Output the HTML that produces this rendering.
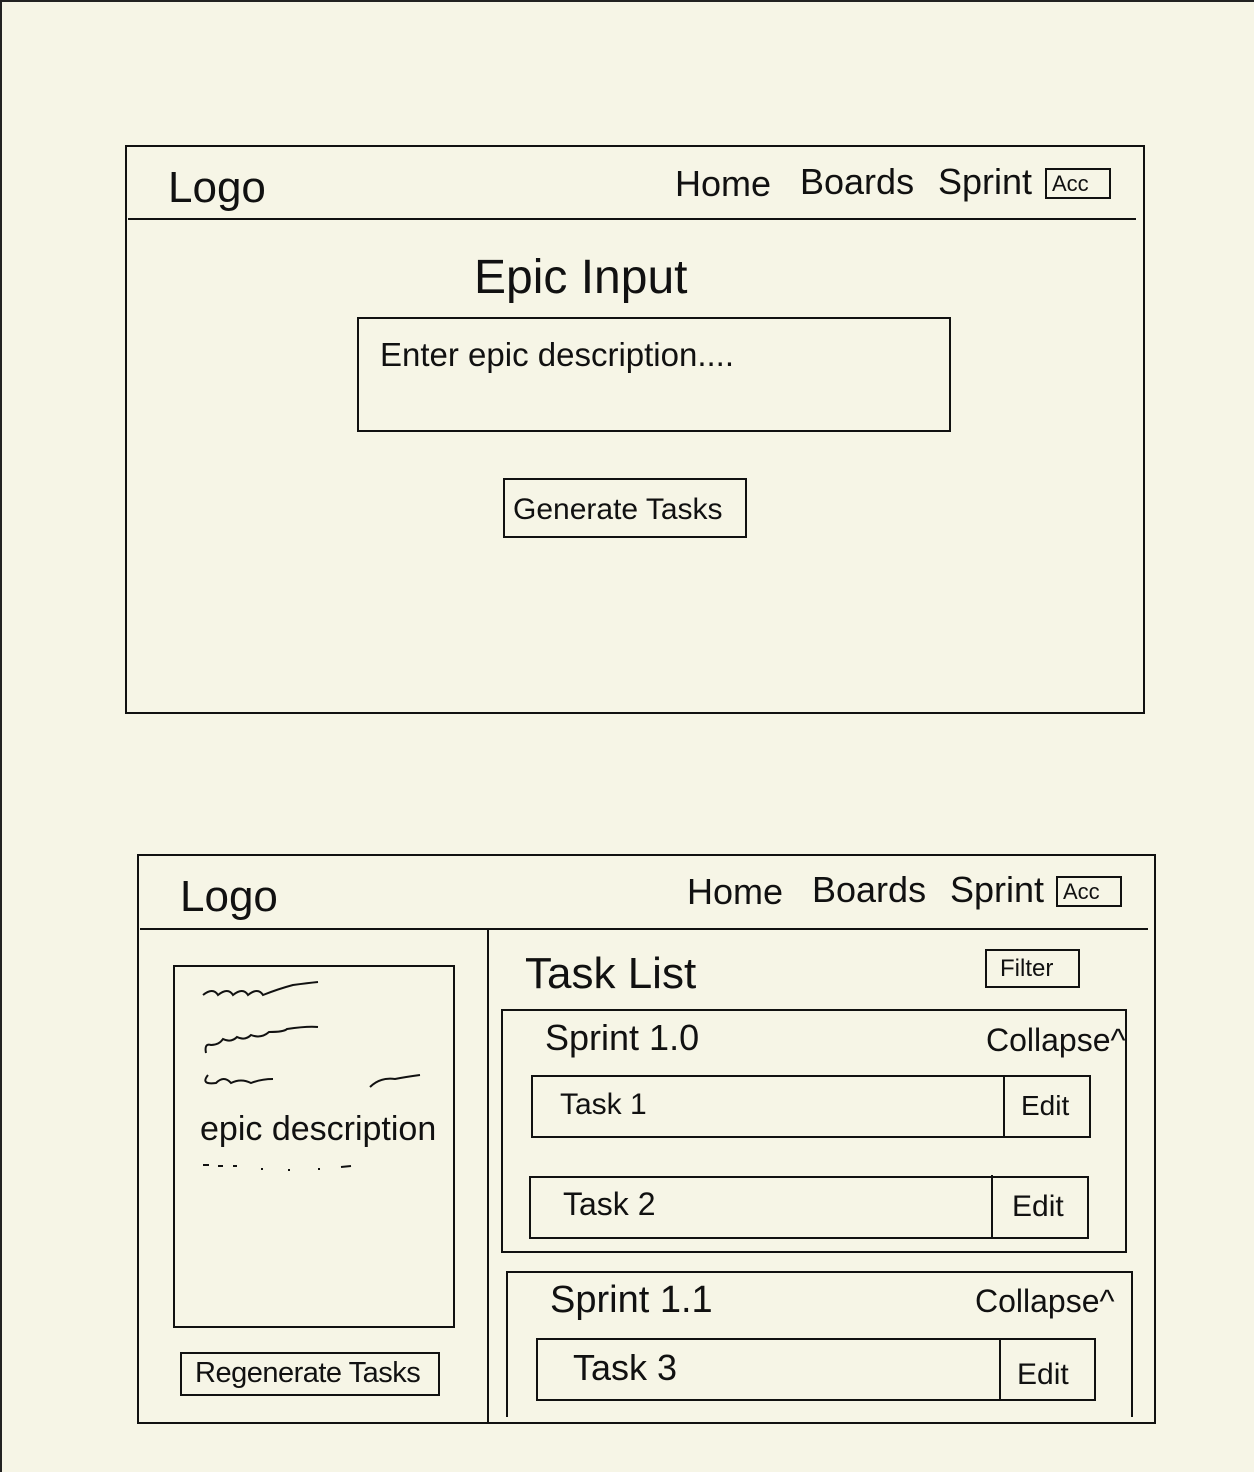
<!DOCTYPE html>
<html><head><meta charset="utf-8"><style>
html,body{margin:0;padding:0}
body{width:1254px;height:1472px;background:#f6f5e6;position:relative;overflow:hidden;font-family:"Liberation Sans",sans-serif;color:#111}
.frame{position:absolute;left:0;top:0;width:1254px;height:1472px;border-top:2px solid #222;border-left:2px solid #222;box-sizing:border-box}
.b{position:absolute;border:2px solid #111;box-sizing:border-box}
.h{position:absolute;height:2px;background:#111}
.v{position:absolute;width:2px;background:#111}
.t{position:absolute;white-space:nowrap;line-height:1}
</style></head><body>
<div class="frame"></div>

<div class="b" style="left:125px;top:145px;width:1020px;height:569px"></div>
<div class="h" style="left:128px;top:218px;width:1008px"></div>
<div class="t" style="left:168px;top:166px;font-size:44px">Logo</div>
<div class="t" style="left:675px;top:166px;font-size:36px">Home</div>
<div class="t" style="left:800px;top:164px;font-size:36px">Boards</div>
<div class="t" style="left:938px;top:164px;font-size:36px">Sprint</div>
<div class="b" style="left:1045px;top:168px;width:66px;height:31px"></div>
<div class="t" style="left:1052px;top:173px;font-size:22px">Acc</div>
<div class="t" style="left:474px;top:254px;font-size:48px">Epic Input</div>
<div class="b" style="left:357px;top:317px;width:594px;height:115px"></div>
<div class="t" style="left:380px;top:338px;font-size:33px">Enter epic description....</div>
<div class="b" style="left:503px;top:478px;width:244px;height:60px"></div>
<div class="t" style="left:513px;top:495px;font-size:30px">Generate Tasks</div>

<div class="b" style="left:137px;top:854px;width:1019px;height:570px"></div>
<div class="h" style="left:140px;top:928px;width:1008px"></div>
<div class="t" style="left:180px;top:875px;font-size:44px">Logo</div>
<div class="t" style="left:687px;top:874px;font-size:36px">Home</div>
<div class="t" style="left:812px;top:872px;font-size:36px">Boards</div>
<div class="t" style="left:950px;top:872px;font-size:36px">Sprint</div>
<div class="b" style="left:1056px;top:876px;width:66px;height:31px"></div>
<div class="t" style="left:1063px;top:881px;font-size:22px">Acc</div>
<div class="v" style="left:487px;top:930px;height:494px"></div>

<div class="b" style="left:173px;top:965px;width:282px;height:363px"></div>
<svg style="position:absolute;left:173px;top:965px" width="282" height="220">
<g fill="none" stroke="#111" stroke-width="2">
<path d="M30 30 q10 -8 15 0 q10 -8 15 0 q10 -8 15 0 q10 -8 15 0 q15 -6 30 -10 q15 -2 25 -3"/>
<path d="M33 88 q-2 -10 5 -8 q8 0 12 -6 q8 4 14 -2 q8 4 14 -2 q10 4 18 -3 q15 0 18 -3 q20 -3 31 -2"/>
<path d="M35 110 q-8 10 8 8 q8 -8 15 0 q10 -5 20 0 q10 -4 22 -4"/>
<path d="M197 122 q10 -10 25 -8 q10 -2 25 -4"/>
<path d="M30 200 l6 0 M45 201 l5 0 M60 201 l4 0 M88 204 l2 0 M115 205 l2 0 M145 204 l2 0 M168 202 l10 -1"/>
</g></svg>
<div class="t" style="left:200px;top:1112px;font-size:34px">epic description</div>
<div class="b" style="left:180px;top:1352px;width:260px;height:44px"></div>
<div class="t" style="left:195px;top:1359px;font-size:29px;letter-spacing:-0.5px">Regenerate Tasks</div>

<div class="t" style="left:525px;top:952px;font-size:44px">Task List</div>
<div class="b" style="left:985px;top:949px;width:95px;height:39px"></div>
<div class="t" style="left:1000px;top:957px;font-size:24px">Filter</div>

<div class="b" style="left:501px;top:1009px;width:626px;height:244px"></div>
<div class="t" style="left:545px;top:1020px;font-size:36px">Sprint 1.0</div>
<div class="t" style="left:986px;top:1024px;font-size:32px">Collapse^</div>
<div class="b" style="left:531px;top:1075px;width:560px;height:63px"></div>
<div class="v" style="left:1003px;top:1077px;height:59px"></div>
<div class="t" style="left:560px;top:1090px;font-size:30px">Task 1</div>
<div class="t" style="left:1021px;top:1092px;font-size:28px">Edit</div>
<div class="b" style="left:529px;top:1176px;width:560px;height:63px"></div>
<div class="v" style="left:991px;top:1175px;height:62px"></div>
<div class="t" style="left:563px;top:1188px;font-size:32px">Task 2</div>
<div class="t" style="left:1012px;top:1192px;font-size:30px">Edit</div>

<div class="b" style="left:506px;top:1271px;width:627px;height:146px;border-bottom:none"></div>
<div class="t" style="left:550px;top:1281px;font-size:38px">Sprint 1.1</div>
<div class="t" style="left:975px;top:1285px;font-size:32px">Collapse^</div>
<div class="b" style="left:536px;top:1338px;width:560px;height:63px"></div>
<div class="v" style="left:999px;top:1340px;height:59px"></div>
<div class="t" style="left:573px;top:1350px;font-size:36px">Task 3</div>
<div class="t" style="left:1017px;top:1360px;font-size:30px">Edit</div>
</body></html>
